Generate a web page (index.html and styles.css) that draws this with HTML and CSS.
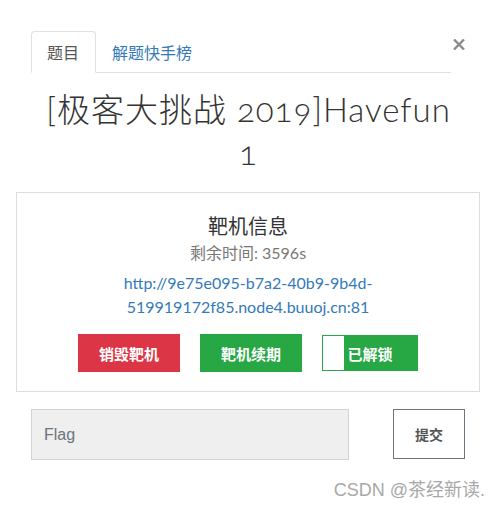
FILE: index.html
```html
<!DOCTYPE html>
<html lang="zh-CN">
<head>
    <meta charset="UTF-8">
    <meta name="viewport" content="width=device-width, initial-scale=1.0">
    <title>[极客大挑战 2019]Havefun 1</title>
    <link rel="stylesheet" href="styles.css">
</head>
<body>
    <div class="modal">
        <div class="modal-head">
            <ul class="tabs">
                <li class="tab active">题目</li>
                <li class="tab"><a href="#">解题快手榜</a></li>
            </ul>
            <button class="close" type="button" aria-label="关闭">
                <svg width="12" height="11" viewBox="0 0 12 11">
                    <path d="M1 0.5 L11 10.5 M11 0.5 L1 10.5" stroke="#8a8a8a" stroke-width="2.4" fill="none"/>
                </svg>
            </button>
        </div>

        <h2 class="challenge-title">[极客大挑战 2019]Havefun 1</h2>

        <div class="target-card">
            <h4>靶机信息</h4>
            <p class="remain">剩余时间: 3596s</p>
            <p class="target-url"><a href="#">http://9e75e095-b7a2-40b9-9b4d-519919172f85.node4.buuoj.cn:81</a></p>
            <div class="actions">
                <button class="btn btn-red" type="button">销毁靶机</button>
                <button class="btn btn-green" type="button">靶机续期</button>
                <button class="btn btn-green btn-unlocked" type="button">已解锁</button>
            </div>
        </div>

        <form class="flag-form">
            <input type="text" name="flag" placeholder="Flag">
            <button type="submit">提交</button>
        </form>

        <div class="watermark">CSDN @茶经新读.</div>
    </div>
</body>
</html>
```

FILE: styles.css
```css
body{
    margin: 0;
    background: #fff;
    font-family: Lato, "Noto Sans CJK SC", sans-serif;
    color: #333;
}

.modal{
    width: 497px;
}

/* tabs + close */
.modal-head{
    display: flex;
    align-items: flex-start;
    padding: 31px 32px 0 31px;
}
.tabs{
    flex: 1;
    display: flex;
    margin: 0;
    padding: 0;
    list-style: none;
    border-bottom: 1px solid #dde1e6;
}
.tab{
    margin: 0 0 -1px 0;
    padding: 10px 15px;
    line-height: 20px;
    font-size: 16px;
    font-family: "Noto Sans CJK SC", sans-serif;
    border: 1px solid transparent;
    border-radius: 4px 4px 0 0;
}
.tab.active{
    padding: 10px 16px 10px 15px;
    color: #555;
    background: #fff;
    border-color: #dde1e6 #dde1e6 transparent;
}
.tab a{
    color: #337ab7;
    text-decoration: none;
}
.close{
    width: 12px;
    height: 11px;
    margin: 8px 0 0 2px;
    padding: 0;
    border: 0;
    background: none;
    display: flex;
}

.challenge-title{
    margin: 15px 0 0;
    padding: 0 36px;
    text-align: center;
    font-size: 33px;
    line-height: 43px;
    font-weight: 300;
    letter-spacing: 1px;
    font-variant-numeric: oldstyle-nums;
    color: #333;
}

/* target box */
.target-card{
    margin: 18px 17px 0 16px;
    padding: 20px 10px 19px;
    border: 1px solid #dedede;
    text-align: center;
}
.target-card h4{
    margin: 0;
    font-size: 20px;
    line-height: 26px;
    font-weight: 400;
    color: #333;
}
.remain{
    margin: 2px 0 0;
    font-size: 16px;
    line-height: 24px;
    color: #777;
}
.target-url{
    margin: 6px 0 0;
    font-size: 16px;
    line-height: 24px;
}
.target-url a{
    color: #337ab7;
    text-decoration: none;
}
.actions{
    display: flex;
    justify-content: center;
    align-items: center;
    gap: 20px;
    margin-top: 15px;
}
.btn{
    width: 102px;
    height: 38px;
    border: 0;
    padding: 0;
    color: #fff;
    font-size: 15px;
    font-weight: 700;
    font-family: "Noto Sans CJK SC", sans-serif;
}
.btn-red{
    background: #dc3545;
}
.btn-green{
    background: #28a745;
}
.btn-unlocked{
    position: relative;
    width: 96px;
    height: 36px;
    border: 1px solid #28a745;
}
.btn-unlocked::before{
    content: "";
    position: absolute;
    left: 0;
    top: 0;
    width: 21px;
    height: 34px;
    background: #fff;
}

/* flag form */
.flag-form{
    display: flex;
    align-items: flex-start;
    gap: 44px;
    margin: 17px 0 0;
    padding: 0 32px 0 31px;
}
.flag-form input{
    width: 318px;
    height: 51px;
    box-sizing: border-box;
    padding: 0 12px;
    background: #efefef;
    border: 1px solid #ced4da;
    font-size: 16px;
    font-family: "Liberation Sans", Arial, sans-serif;
}
.flag-form input::placeholder{
    color: #6c757d;
}
.flag-form button{
    width: 72px;
    height: 50px;
    box-sizing: border-box;
    background: #fff;
    border: 1px solid #6c757d;
    color: #555;
    font-size: 14px;
    font-weight: 700;
    font-family: "Noto Sans CJK SC", sans-serif;
}

.watermark{
    margin-top: 15px;
    padding-right: 12px;
    text-align: right;
    font-size: 18px;
    color: #a8a8a8;
    font-family: "Liberation Sans", "Noto Sans CJK SC", sans-serif;
}
```
